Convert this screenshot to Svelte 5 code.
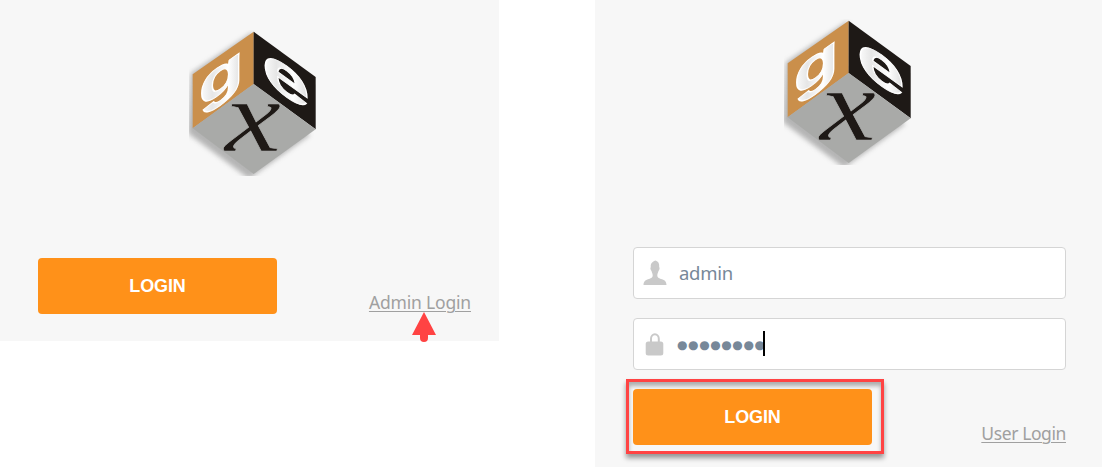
<script lang="ts">
  let username = "admin";
  let password = "●●●●●●●●";
</script>

{#snippet logo()}
  <svg class="logo" width="128" height="146" viewBox="27 30 384 438">
    <defs>
      <linearGradient id="silver" x1="0" y1="0" x2="1" y2="0">
        <stop offset="0" stop-color="#fff" />
        <stop offset="0.3" stop-color="#e6e6e6" />
        <stop offset="0.65" stop-color="#fff" />
        <stop offset="1" stop-color="#d8d8d8" />
      </linearGradient>
      <filter id="soft" filterUnits="userSpaceOnUse" x="27" y="30" width="384" height="438">
        <feGaussianBlur stdDeviation="8" />
      </filter>
    </defs>
    <path d="M33 160L218 36L230 190L390 345L207 476L24 340Z" fill="#999" opacity="0.7" filter="url(#soft)" />
    <path d="M38 163L221 35V192L38 325Z" fill="#ca8f4b" />
    <path d="M221 35L407 171V328L221 192Z" fill="#1e1916" />
    <path d="M221 192L407 328L221 462L38 325Z" fill="#a9aaa8" />
    <text class="face" font-size="158" transform="matrix(1.4 -0.98 0 1 56 268)">g</text>
    <text class="face" font-size="172" transform="matrix(1.5 1.08 0 1 246 177)">e</text>
    <text class="base" font-size="302" transform="matrix(1.26 0 0 1 134 393)">x</text>
  </svg>
{/snippet}

<main>
  <section class="panel user">
    {@render logo()}
    <div class="actions">
      <button>LOGIN</button>
      <a href="#admin">Admin Login
        <svg class="arrow" width="24" height="30" viewBox="0 0 24 30">
          <path d="M12 0L24 23H16V26A4 4 0 0 1 8 26V23H0Z" fill="#ff4343" />
        </svg>
      </a>
    </div>
  </section>

  <section class="panel admin">
    {@render logo()}
    <div class="fields">
      <div class="field">
        <svg width="24" height="26" viewBox="0 0 24 26">
          <path d="M12.5 0.5C15.5 1.5 16.5 3.5 16.2 7C17 8 16.5 10 15.5 11C15 13 14.3 13.5 14.3 15.5C14.3 18 16.5 18.4 19 19.3C22.5 20.6 23.3 22 23.5 25H0.5C0.7 22 1.5 20.6 5 19.3C7.5 18.4 9.7 18 9.7 15.5C9.7 13.5 9 13 8.5 11C7.5 10 7 8 7.8 7C7.5 4 8.5 2 12.5 0.5Z" fill="#c9c9c9" />
        </svg>
        <span class="value">{username}</span>
      </div>
      <div class="field">
        <svg width="24" height="26" viewBox="0 0 24 26">
          <path d="M8 12V7.8A3.9 4.6 0 0 1 15.8 7.8V12" fill="none" stroke="#c9c9c9" stroke-width="2" />
          <rect x="2.7" y="10.5" width="17.6" height="14" rx="2.5" fill="#c9c9c9" />
        </svg>
        <span class="dots">{password}</span><i class="caret"></i>
      </div>
    </div>
    <div class="actions">
      <div class="target">
        <button>LOGIN</button>
        <div class="highlight"></div>
      </div>
      <a class="back" href="#user">User Login</a>
    </div>
  </section>
</main>

<style>
  :global(body) {
    background: #fff;
    overflow: hidden;
  }

  main {
    display: flex;
    align-items: flex-start;
    justify-content: space-between;
    height: 467px;
    font-family: "Noto Sans", "Open Sans", sans-serif;
  }

  .panel {
    box-sizing: border-box;
    background: #f7f7f7;
  }

  .user {
    width: 499px;
    height: 341px;
    padding: 30px 28px 0 38px;
  }

  .admin {
    width: 507px;
    height: 467px;
    padding: 19px 36px 0 38px;
  }

  .logo {
    display: block;
    margin: 0 0 82px 151px;
    overflow: visible;
  }

  .face {
    font-family: "Liberation Sans", Arial, sans-serif;
    font-weight: bold;
    fill: url(#silver);
    stroke: #fff;
    stroke-width: 3;
  }

  .base {
    font-family: "Liberation Serif", serif;
    font-style: italic;
    fill: #1e1916;
    stroke: #a9aaa8;
    stroke-width: 2;
  }

  .actions {
    display: flex;
    justify-content: space-between;
    align-items: flex-end;
    height: 56px;
  }

  button {
    display: block;
    width: 239px;
    height: 56px;
    padding: 0;
    border: none;
    border-radius: 4px;
    background: #ff9119;
    color: #fff;
    font: bold 18px "Liberation Sans", Arial, sans-serif;
    letter-spacing: -0.1px;
  }

  a {
    position: relative;
    color: #a0a0a0;
    font-size: 17.5px;
    line-height: 24px;
    letter-spacing: -0.18px;
    text-decoration: underline;
    text-decoration-thickness: 1px;
    text-underline-offset: 2px;
    white-space: nowrap;
  }

  .back {
    letter-spacing: -0.4px;
  }

  .arrow {
    position: absolute;
    right: 35px;
    top: 22px;
  }

  .fields {
    display: grid;
    gap: 19px;
    margin-bottom: 19px;
  }

  .field {
    display: flex;
    align-items: center;
    box-sizing: border-box;
    height: 52px;
    padding-left: 9px;
    border: 1px solid #d5d5d5;
    border-radius: 4px;
    background: #fff;
    color: #778899;
  }

  .value {
    margin-left: 12px;
    font-size: 18.5px;
    letter-spacing: -0.3px;
    padding-bottom: 2px;
  }

  .dots {
    margin-left: 10px;
    font: 12px/26px "DejaVu Sans", sans-serif;
    letter-spacing: 0.6px;
    width: 86px;
    padding-top: 1px;
    white-space: nowrap;
  }

  .caret {
    width: 2px;
    height: 25px;
    margin-top: -2px;
    background: #000;
    z-index: 1;
  }

  .target {
    position: relative;
  }

  /* callout frame around the button */
  .highlight {
    position: absolute;
    inset: -10px -12px -9px -7px;
    border: 3px solid #ff4343;
    box-shadow: 0 4px 5px rgba(0, 0, 0, 0.4), inset 0 4px 4px rgba(0, 0, 0, 0.3);
    clip-path: polygon(evenodd, -12px -12px, 270px -12px, 270px 90px, -12px 90px, -12px -12px, 7px 10px, 246px 10px, 246px 66px, 7px 66px, 7px 10px);
  }
</style>
